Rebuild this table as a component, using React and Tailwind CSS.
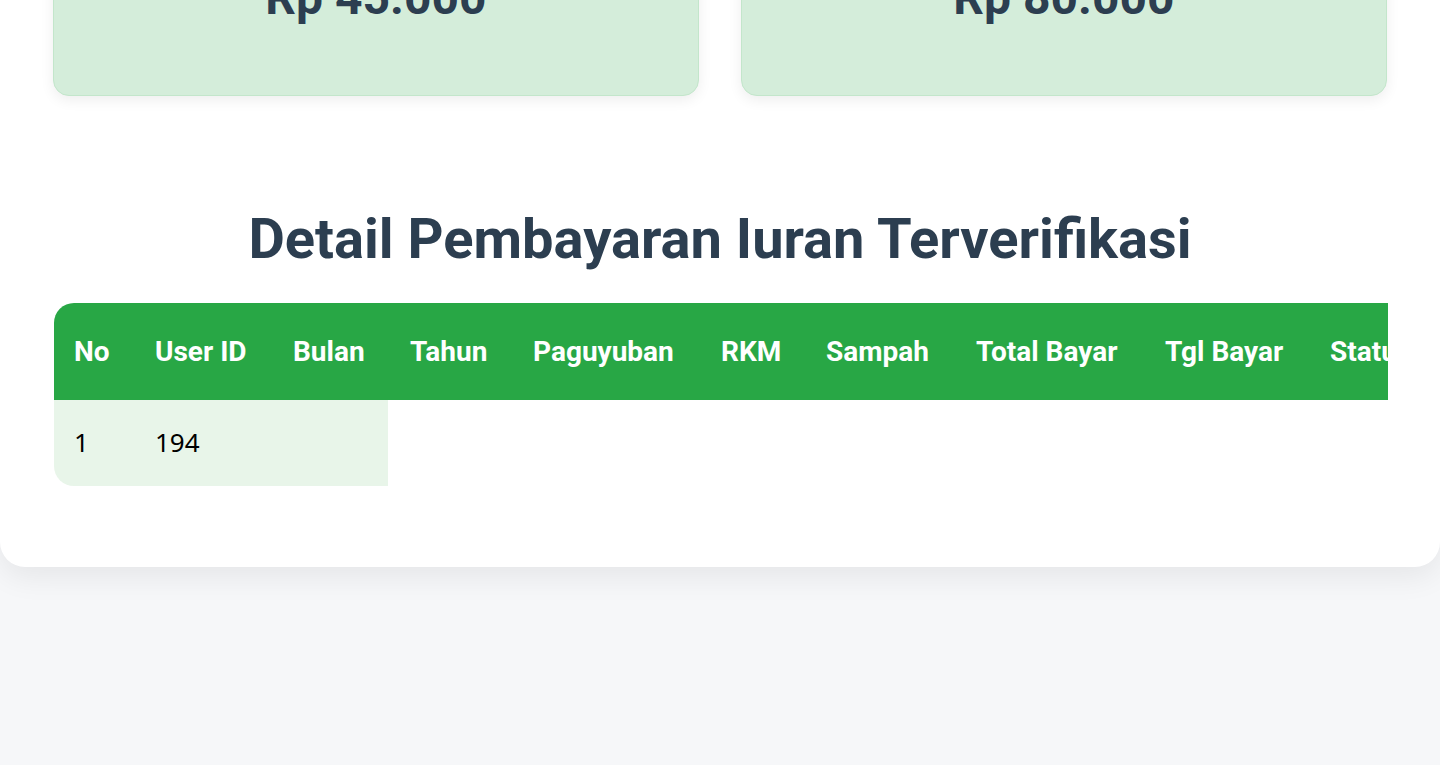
import React from "react";

const summary = [
  { label: "Total Iuran Bulan Ini", amount: "Rp 45.000" },
  { label: "Total Iuran Keseluruhan", amount: "Rp 80.000" },
];

const columns = [
  { title: "No", width: "w-[79px]" },
  { title: "User ID", width: "w-[138px]" },
  { title: "Bulan", width: "w-[117px]" },
  { title: "Tahun", width: "w-[123px]" },
  { title: "Paguyuban", width: "w-[188px]" },
  { title: "RKM", width: "w-[105px]" },
  { title: "Sampah", width: "w-[150px]" },
  { title: "Total Bayar", width: "w-[189px]" },
  { title: "Tgl Bayar", width: "w-[165px]" },
  { title: "Status", width: "w-[140px]" },
  { title: "Bukti", width: "w-[120px]" },
];

const rows = [{ no: 1, userId: 194, bulan: "" }];

const App = () => {
  return (
    <div className="min-h-[calc(100vh+62px)] bg-[#f6f7f9] font-['Roboto',sans-serif]">
      <div className="bg-white rounded-b-[25px] shadow-[0_10px_30px_rgba(0,0,0,0.07)] px-[53px] pb-[81px]">
        {/* Summary cards */}
        <div className="grid grid-cols-2 gap-[42px] -mt-[62px]">
          {summary.map((item) => (
            <div
              key={item.label}
              className="bg-[#d4edda] border border-[#c3e6cb] rounded-2xl shadow-[0_4px_14px_rgba(0,0,0,0.07)] pt-[30px] pb-[68px] text-center"
            >
              <h3 className="text-[48px] leading-[1.2] font-bold text-[#2c3e50]">
                {item.amount}
              </h3>
            </div>
          ))}
        </div>

        {/* Table section */}
        <h2 className="mt-[110px] mb-[30px] text-center text-[56px] leading-[1.2] font-bold text-[#2c3e50]">
          Detail Pembayaran Iuran Terverifikasi
        </h2>

        <div className="overflow-hidden ml-px -mr-px">
          <table className="table-fixed w-[1514px] border-collapse whitespace-nowrap text-left">
            <thead>
              <tr className="bg-[#28a745]">
                {columns.map((col, i) => (
                  <th
                    key={col.title}
                    className={`${col.width} h-[97px] pr-[22px] text-[28px] leading-[33px] font-bold text-white ${
                      i === 0 ? "pl-[20px] rounded-tl-[20px]" : "pl-[22px]"
                    }`}
                  >
                    {col.title}
                  </th>
                ))}
              </tr>
            </thead>
            <tbody>
              {rows.map((row) => (
                <tr key={row.no}>
                  <td className="h-[86px] pl-[20px] pr-[22px] bg-[#e8f5e9] rounded-bl-[20px] text-[26px] text-black font-['Noto_Sans',sans-serif]">
                    {row.no}
                  </td>
                  <td className="h-[86px] px-[22px] bg-[#e8f5e9] text-[26px] text-black font-['Noto_Sans',sans-serif]">
                    {row.userId}
                  </td>
                  <td className="h-[86px] px-[22px] bg-[#e8f5e9] text-[26px] text-black font-['Noto_Sans',sans-serif]">
                    {row.bulan}
                  </td>
                </tr>
              ))}
            </tbody>
          </table>
        </div>
      </div>
    </div>
  );
};

export default App;
